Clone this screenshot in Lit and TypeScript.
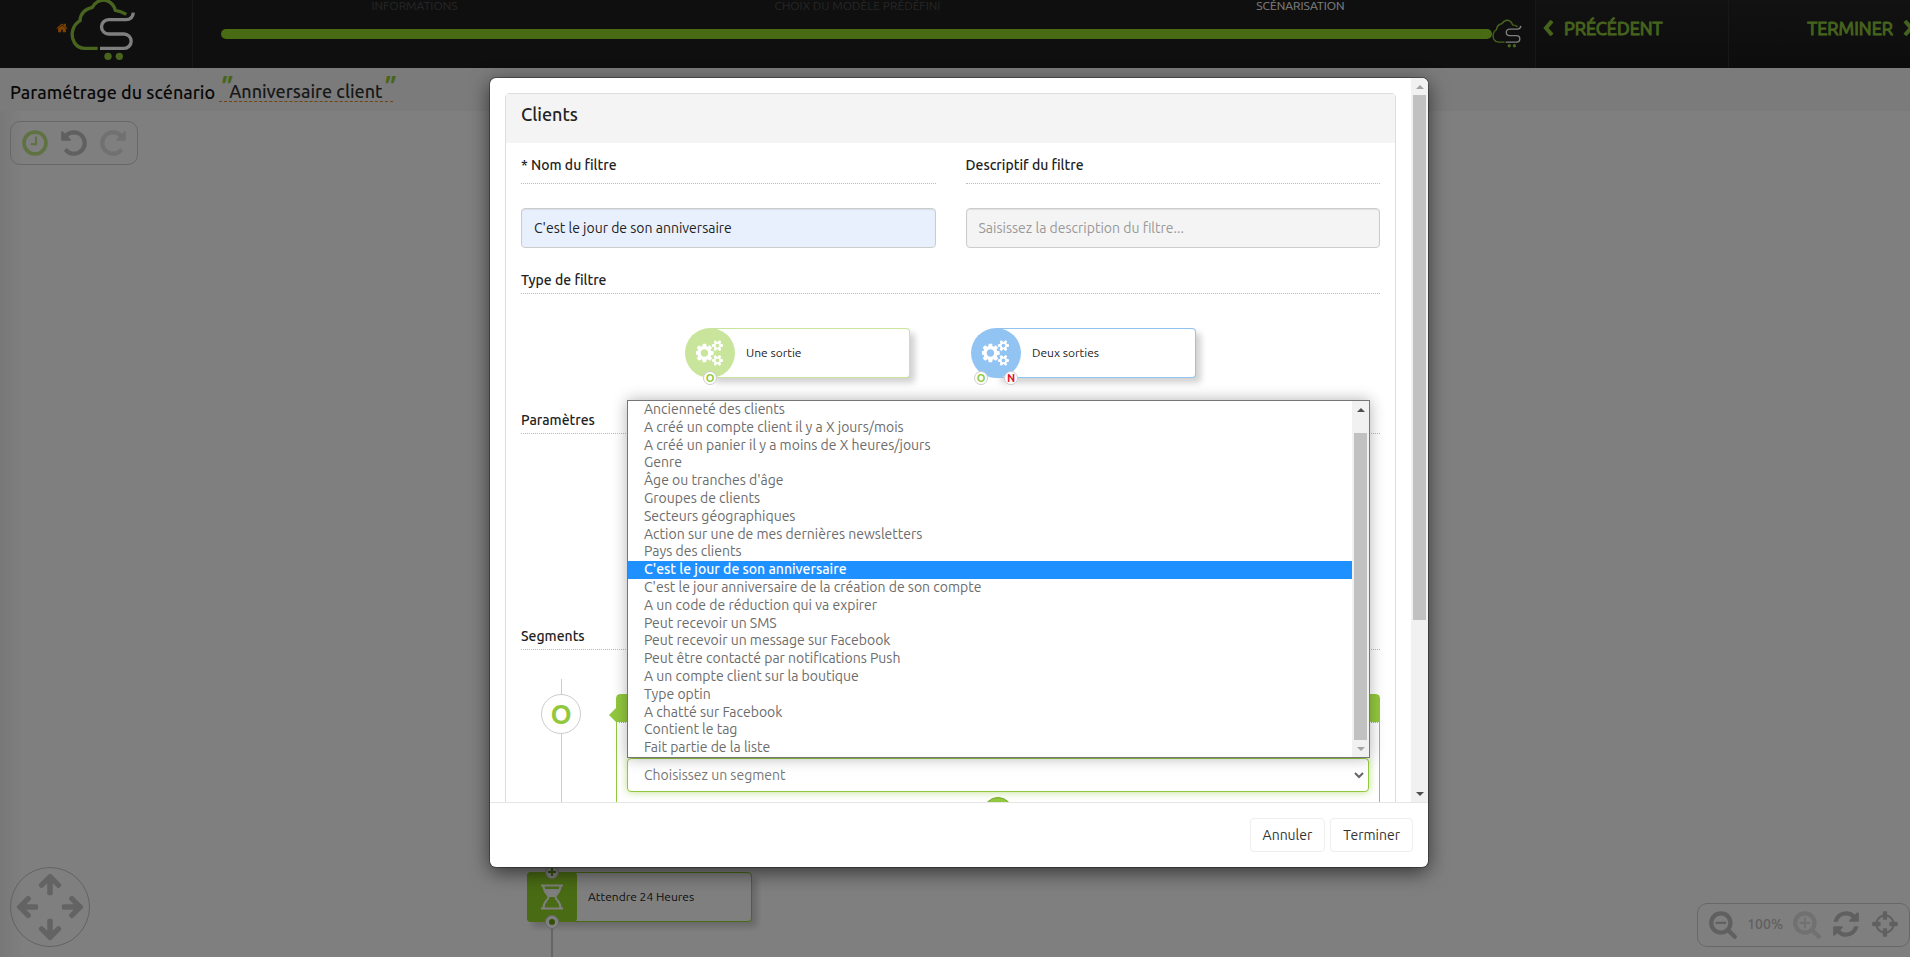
import { LitElement, html, css, svg } from "lit";
import { customElement, property, state } from "lit/decorators.js";
import { classMap } from "lit/directives/class-map.js";

const ICONS: Record<string, string> = {
  home: "M1472 992v480q0 26-19 45t-45 19h-384v-384h-256v384h-384q-26 0-45-19t-19-45v-480q0-1 .5-3t.5-3l575-474 575 474q1 2 1 6zm223-69l-62 74q-8 9-21 11h-3q-13 0-21-7l-692-577-692 577q-12 8-24 7-13-2-21-11l-62-74q-8-10-7-23.5t11-21.5l719-599q32-26 76-26t76 26l244 204v-195q0-14 9-23t23-9h192q14 0 23 9t9 23v408l219 182q10 8 11 21.5t-7 23.5z",
  clock: "M1024 544v448q0 14-9 23t-23 9h-320q-14 0-23-9t-9-23v-64q0-14 9-23t23-9h224v-352q0-14 9-23t23-9h64q14 0 23 9t9 23zm416 352q0-148-73-273t-198-198-273-73-273 73-198 198-73 273 73 273 198 198 273 73 273-73 198-198 73-273zm224 0q0 209-103 385.5t-279.5 279.5-385.5 103-385.5-103-279.5-279.5-103-385.5 103-385.5 279.5-279.5 385.5-103 385.5 103 279.5 279.5 103 385.5z",
  undo: "M1664 896q0 156-61 298t-164 245-245 164-298 61q-172 0-327-72.5t-264-204.5q-7-10-6.5-22.5t8.5-20.5l137-138q10-9 25-9 16 2 23 12 73 95 179 147t225 52q104 0 198.5-40.5t163.5-109.5 109.5-163.5 40.5-198.5-40.5-198.5-109.5-163.5-163.5-109.5-198.5-40.5q-98 0-188 35.5t-160 101.5l137 138q31 30 14 69-17 40-59 40h-448q-26 0-45-19t-19-45v-448q0-42 40-59 39-17 69 14l130 129q107-101 244.5-156.5t284.5-55.5q156 0 298 61t245 164 164 245 61 298z",
  arrow: "M1664 896v128q0 53-32.5 90.5t-84.5 37.5h-704l293 294q38 36 38 90t-38 90l-75 76q-37 37-90 37-52 0-91-37l-651-652q-37-37-37-90 0-52 37-91l651-650q38-38 91-38 52 0 90 38l75 74q38 38 38 91t-38 91l-293 293h704q52 0 84.5 37.5t32.5 90.5z",
  zoomOut: "M1088 800v64q0 13-9.5 22.5t-22.5 9.5h-576q-13 0-22.5-9.5t-9.5-22.5v-64q0-13 9.5-22.5t22.5-9.5h576q13 0 22.5 9.5t9.5 22.5zm128 32q0-185-131.5-316.5t-316.5-131.5-316.5 131.5-131.5 316.5 131.5 316.5 316.5 131.5 316.5-131.5 131.5-316.5zm512 832q0 53-37.5 90.5t-90.5 37.5q-54 0-90-38l-343-342q-179 124-399 124-143 0-273.5-55.5t-225-150-150-225-55.5-273.5 55.5-273.5 150-225 225-150 273.5-55.5 273.5 55.5 225 150 150 225 55.5 273.5q0 220-124 399l343 343q37 37 37 90z",
  zoomIn: "M1088 800v64q0 13-9.5 22.5t-22.5 9.5h-224v224q0 13-9.5 22.5t-22.5 9.5h-64q-13 0-22.5-9.5t-9.5-22.5v-224h-224q-13 0-22.5-9.5t-9.5-22.5v-64q0-13 9.5-22.5t22.5-9.5h224v-224q0-13 9.5-22.5t22.5-9.5h64q13 0 22.5 9.5t9.5 22.5v224h224q13 0 22.5 9.5t9.5 22.5zm128 32q0-185-131.5-316.5t-316.5-131.5-316.5 131.5-131.5 316.5 131.5 316.5 316.5 131.5 316.5-131.5 131.5-316.5zm512 832q0 53-37.5 90.5t-90.5 37.5q-54 0-90-38l-343-342q-179 124-399 124-143 0-273.5-55.5t-225-150-150-225-55.5-273.5 55.5-273.5 150-225 225-150 273.5-55.5 273.5 55.5 225 150 150 225 55.5 273.5q0 220-124 399l343 343q37 37 37 90z",
  refresh: "M1639 1056q0 5-1 7-64 268-268 434.5t-478 166.5q-146 0-282.5-55t-243.5-157l-129 129q-19 19-45 19t-45-19-19-45v-448q0-26 19-45t45-19h448q26 0 45 19t19 45-19 45l-137 137q71 66 161 102t187 36q134 0 250-65t186-179q11-17 53-117 8-23 30-23h192q13 0 22.5 9.5t9.5 22.5zm25-800v448q0 26-19 45t-45 19h-448q-26 0-45-19t-19-45 19-45l138-138q-148-137-349-137-134 0-250 65t-186 179q-11 17-53 117-8 23-30 23h-199q-13 0-22.5-9.5t-9.5-22.5v-7q65-268 270-434.5t480-166.5q146 0 284 55.5t245 156.5l130-129q19-19 45-19t45 19 19 45z",
  target: "M1325 1024h-109q-26 0-45-19t-19-45v-128q0-26 19-45t45-19h109q-32-108-112.5-188.5t-188.5-112.5v109q0 26-19 45t-45 19h-128q-26 0-45-19t-19-45v-109q-108 32-188.5 112.5t-112.5 188.5h109q26 0 45 19t19 45v128q0 26-19 45t-45 19h-109q32 108 112.5 188.5t188.5 112.5v-109q0-26 19-45t45-19h128q26 0 45 19t19 45v109q108-32 188.5-112.5t112.5-188.5zm339-192v128q0 26-19 45t-45 19h-143q-37 161-154.5 278.5t-278.5 154.5v143q0 26-19 45t-45 19h-128q-26 0-45-19t-19-45v-143q-161-37-278.5-154.5t-154.5-278.5h-143q-26 0-45-19t-19-45v-128q0-26 19-45t45-19h143q37-161 154.5-278.5t278.5-154.5v-143q0-26 19-45t45-19h128q26 0 45 19t19 45v143q161 37 278.5 154.5t154.5 278.5h143q26 0 45 19t19 45z",
  cogs: "M832 896q0-106-75-181t-181-75-181 75-75 181 75 181 181 75 181-75 75-181zm768 512q0-52-38-90t-90-38-90 38-38 90q0 53 37.5 90.5t90.5 37.5 90.5-37.5 37.5-90.5zm0-1024q0-52-38-90t-90-38-90 38-38 90q0 53 37.5 90.5t90.5 37.5 90.5-37.5 37.5-90.5zm-384 421v185q0 10-7 19.5t-16 10.5l-155 24q-11 35-32 76 34 48 90 115 7 11 7 20 0 12-7 19-23 30-82.5 89.5t-78.5 59.5q-11 0-21-7l-115-90q-37 19-77 31-11 108-23 155-7 24-30 24h-186q-11 0-20-7.5t-10-17.5l-23-153q-34-10-75-31l-118 89q-7 7-20 7-11 0-21-8-144-133-144-160 0-9 7-19 10-14 41-53t47-61q-23-44-35-82l-152-24q-10-1-17-9.5t-7-19.5v-185q0-10 7-19.5t16-10.5l155-24q11-35 32-76-34-48-90-115-7-11-7-20 0-12 7-20 22-30 82-89t79-59q11 0 21 7l115 90q34-18 77-32 11-108 23-154 7-24 30-24h186q11 0 20 7.5t10 17.5l23 153q34 10 75 31l118-89q8-7 20-7 11 0 21 8 144 133 144 160 0 8-7 19-12 16-42 54t-45 60q23 48 34 82l152 23q10 2 17 10.5t7 19.5zm640 533v140q0 16-149 31-12 27-30 52 51 113 51 138 0 4-4 7-122 71-124 71-8 0-46-47t-52-68q-20 2-30 2t-30-2q-14 21-52 68t-46 47q-2 0-124-71-4-3-4-7 0-25 51-138-18-25-30-52-149-15-149-31v-140q0-16 149-31 13-29 30-52-51-113-51-138 0-4 4-7 4-2 35-20t59-34 30-16q8 0 46 46.5t52 67.5q20-2 30-2t30 2q51-71 92-112l6-2q4 0 124 70 4 3 4 7 0 25-51 138 17 23 30 52 149 15 149 31zm0-1024v140q0 16-149 31-12 27-30 52 51 113 51 138 0 4-4 7-122 71-124 71-8 0-46-47t-52-68q-20 2-30 2t-30-2q-14 21-52 68t-46 47q-2 0-124-71-4-3-4-7 0-25 51-138-18-25-30-52-149-15-149-31v-140q0-16 149-31 13-29 30-52-51-113-51-138 0-4 4-7 4-2 35-20t59-34 30-16q8 0 46 46.5t52 67.5q20-2 30-2t30 2q51-71 92-112l6-2q4 0 124 70 4 3 4 7 0 25-51 138 17 23 30 52 149 15 149 31z",
};

const VIEW_BOXES: Record<string, string> = {
  cogs: "0 0 1920 1792",
  arrow: "0 64 1792 1792",
};

const SEGMENTS = [
  "Ancienneté des clients",
  "A créé un compte client il y a X jours/mois",
  "A créé un panier il y a moins de X heures/jours",
  "Genre",
  "Âge ou tranches d'âge",
  "Groupes de clients",
  "Secteurs géographiques",
  "Action sur une de mes dernières newsletters",
  "Pays des clients",
  "C'est le jour de son anniversaire",
  "C'est le jour anniversaire de la création de son compte",
  "A un code de réduction qui va expirer",
  "Peut recevoir un SMS",
  "Peut recevoir un message sur Facebook",
  "Peut être contacté par notifications Push",
  "A un compte client sur la boutique",
  "Type optin",
  "A chatté sur Facebook",
  "Contient le tag",
  "Fait partie de la liste",
];

@customElement("fa-icon")
class FaIcon extends LitElement {
  @property() name = "home";
  static styles = css`
    :host { display: inline-flex; flex: none; width: 30px; height: 30px; }
    svg { width: 100%; height: 100%; fill: currentColor; }
  `;
  render() {
    const box = VIEW_BOXES[this.name] ?? "0 0 1792 1792";
    return html`<svg viewBox=${box} aria-hidden="true">${svg`<path d=${ICONS[this.name]}></path>`}</svg>`;
  }
}

@customElement("cloud-logo")
class CloudLogo extends LitElement {
  @property({ type: Number }) weight = 10;
  static styles = css`
    :host { display: block; flex: none; }
    svg { display: block; width: 100%; height: 100%; fill: none; overflow: visible; }
    .cloud { stroke: #92c83e; }
    .road { stroke: #ffffff; }
    .wheel { fill: #92c83e; }
  `;
  render() {
    return html`<svg viewBox="60 0 198 183" aria-hidden="true" stroke-width=${this.weight}>
      <path class="cloud" d="M143 145H105C76 145 62 118 68 92Q73 72 90 62Q92 30 127 22Q142 -3 168 1Q190 8 196 31Q212 33 229 43"></path>
      <path class="road" d="M150 145H222a21 21 0 0 0 0-43H176a21 21 0 0 1 0-43H228Q248 59 250 38"></path>
      <circle class="wheel" cx="174" cy="169" r="11"></circle>
      <circle class="wheel" cx="208" cy="169" r="11"></circle>
    </svg>`;
  }
}

@customElement("scroll-strip")
class ScrollStrip extends LitElement {
  static styles = css`
    :host { display: flex; flex-direction: column; align-items: center; flex: none; width: 17px; background: #f1f1f1; }
    .arrow { height: 17px; display: flex; align-items: center; justify-content: center; flex: none; }
    .arrow::before { content: ""; border: 4px solid transparent; }
    .up::before { border-top-width: 0; border-bottom-color: var(--up, #505050); }
    .down::before { border-bottom-width: 0; border-top-color: var(--down, #505050); }
    .track { flex: 1; width: 13px; display: flex; flex-direction: column; }
    .before { flex: var(--before, 0) 0 0; }
    .thumb { flex: var(--size, 1) 0 0; background: #c1c1c1; }
    .after { flex: var(--after, 0) 0 0; }
  `;
  render() {
    return html`<span class="arrow up"></span>
      <span class="track"><span class="before"></span><span class="thumb"></span><span class="after"></span></span>
      <span class="arrow down"></span>`;
  }
}

@customElement("app-root")
class AppRoot extends LitElement {
  @state() private selected = 9;

  static styles = css`
    :host {
      display: block; position: relative; height: 100vh; overflow: hidden; background: #fff; color: #222;
      font-family: Ubuntu, "Noto Sans", "Open Sans", sans-serif; font-size: 14px; line-height: 20px;
    }
    * { box-sizing: border-box; }
    h1, h2, h3 { margin: 0; font-weight: 500; }
    button, input, select { font: inherit; color: inherit; }

    .page { display: flex; flex-direction: column; height: 100%; isolation: isolate; }
    .top { display: grid; grid-template-columns: 193px 1fr 193px 182px; height: 68px; background: #1f1f1f; flex: none; }
    .brand { display: flex; align-items: flex-start; padding-left: 56px; border-right: 1px solid #303030; color: #ff8400; }
    .brand fa-icon { width: 12px; height: 12px; margin-top: 22px; margin-right: 2px; }
    .brand cloud-logo { width: 66px; height: 61px; }
    .wizard { display: flex; flex-direction: column; padding-right: 13px; }
    .steps { display: grid; grid-template-columns: repeat(3, 1fr); margin-bottom: 7px; color: #4d4d4d; font-size: 12px; line-height: 12px; text-align: center; }
    .steps .on { color: #fff; }
    .progress { display: flex; align-items: center; padding-left: 28px; }
    .bar { flex: 1; height: 10px; border-radius: 5px; background: #92d628; }
    .progress cloud-logo { width: 30px; height: 30px; }
    .move { display: flex; align-items: center; gap: 10px; padding: 0 0 12px 7px; border: 0; border-left: 1px solid #303030; background: linear-gradient(#242424, #1a1a1a); color: #8cc63a; font-size: 18px; -webkit-text-stroke: 1px currentColor; }
    .move svg { width: 11px; height: 16px; fill: none; stroke: currentColor; stroke-width: 4; flex: none; }
    .next { justify-content: flex-end; padding: 0 0 12px; margin-right: -4px; }

    .title { display: flex; align-items: center; gap: 4px; flex: none; height: 43px; padding: 4px 10px 0; background: #f6f6f6; font-size: 18px; line-height: 20px; }
    .title h1 { font-size: 18px; color: #111; }
    .name { display: flex; border-bottom: 1px dashed #e08a1e; color: #333; font-weight: 500; }
    .quote { width: 10px; color: #8fcb36; font-size: 26px; font-style: italic; font-weight: 700; line-height: 12px; }

    .canvas { position: relative; flex: 1; background: linear-gradient(90deg, #f0f0f0, #fff 24px); }
    .tools { position: absolute; display: flex; align-items: center; height: 44px; border: 1px solid #cfcfcf; border-radius: 10px; color: #c0c0c0; }
    .tools button, .pad button { display: flex; padding: 0; border: 0; background: none; color: inherit; }
    .history { left: 10px; top: 10px; gap: 9px; padding: 0 9px; }
    .history .clock { color: #bfe585; }
    .tools .off { color: #e2e2e2; }
    .mirror { transform: scaleX(-1); }
    .zoom { right: 0; bottom: 10px; gap: 9px; padding: 0 9px 2px 10px; font-weight: 500; }
    .pad { position: absolute; left: 10px; bottom: 10px; display: grid; grid-template-areas: ". u ." "l . r" ". d ."; place-items: center; width: 80px; height: 80px; padding: 5px; border: 1px solid #c4c4c4; border-radius: 50%; color: #c6c6c6; }
    .pad fa-icon { width: 26px; height: 26px; }
    .u { grid-area: u; transform: rotate(90deg); }
    .l { grid-area: l; }
    .r { grid-area: r; transform: rotate(180deg); }
    .d { grid-area: d; transform: rotate(-90deg); }
    .pad .u, .pad .l, .pad .r, .pad .d { width: 22px; height: 22px; align-items: center; justify-content: center; }

    .node { position: relative; display: flex; align-items: center; gap: 11px; width: 225px; height: 50px; border: 1px solid var(--tone); border-radius: 4px; background: #fff; box-shadow: 5px 5px 6px rgba(0, 0, 0, 0.18); font-size: 12px; }
    .disc { display: flex; align-items: center; justify-content: center; width: 50px; height: 50px; border-radius: 50%; background: var(--tone); color: #fff; z-index: 1; }
    .disc fa-icon { width: 28px; height: 26px; }
    .square { margin-left: -1px; border-radius: 4px; }
    .disc svg { width: 22px; height: 26px; fill: none; stroke: #fff; stroke-width: 2; }
    .disc .sand { fill: #fff; stroke: none; }
    .port { position: absolute; z-index: 2; display: flex; align-items: center; justify-content: center; width: 14px; height: 14px; border: 1px solid #ccc; border-radius: 50%; background: #fff; color: #8fc93a; font-size: 11px; font-weight: 700; line-height: 12px; bottom: -7px; left: 18px; }
    .port.yes { left: 3px; }
    .port.no { left: 33px; color: #e3132c; }
    .port.in { bottom: auto; top: -8px; left: 17px; }
    .port.out { bottom: -8px; left: 17px; }
    .port.in::before { content: ""; width: 8px; height: 8px; background: linear-gradient(#6aa012, #6aa012) center / 8px 2px no-repeat, linear-gradient(#6aa012, #6aa012) center / 2px 8px no-repeat; }
    .port.out::before { content: ""; width: 6px; height: 6px; border-radius: 50%; background: #6aa012; }
    .wait { position: absolute; left: 527px; bottom: 35px; --tone: #92d628; }
    .wire { position: absolute; left: 551px; bottom: 0; width: 2px; height: 28px; background: #ccc; }

    .backdrop { position: absolute; inset: 0; display: flex; justify-content: center; padding: 78px 0 90px 8px; background: rgba(0, 0, 0, 0.5); }
    .dialog { display: flex; flex-direction: column; width: 938px; max-width: 100%; border-radius: 6px; background: #fff; box-shadow: 0 0 0 1px rgba(0, 0, 0, 0.3), 0 5px 20px rgba(0, 0, 0, 0.6); overflow: hidden; }
    .scroll { display: flex; flex: 1; min-height: 0; overflow: hidden; }
    .view { flex: 1; padding: 15px; }
    .scroll > scroll-strip { --up: #a3a3a3; --before: 0; --size: 525; --after: 165; }
    .panel { border: 1px solid #ddd; border-radius: 4px; }
    .panel-head { padding: 8px 15px 17px; background: #f4f4f4; }
    .panel-head h2 { font-size: 18px; line-height: 24px; }
    .panel-body { padding: 12px 15px; }
    .fields { display: grid; grid-template-columns: 1fr 1fr; gap: 30px; margin-bottom: 22px; }
    .fields label { display: block; padding-bottom: 8px; margin-bottom: 24px; border-bottom: 1px dotted #bbb; font-weight: 500; }
    .fields input { display: block; width: 100%; height: 40px; padding: 0 12px; border: 1px solid #ccc; border-radius: 4px; background: #f4f4f4; box-shadow: inset 0 1px 1px rgba(0, 0, 0, 0.08); }
    .fields .filled { background: #e8f0fe; }
    .fields input::placeholder { color: #999; opacity: 1; }
    h3 { padding-bottom: 3px; border-bottom: 1px dotted #bbb; font-size: 14px; }
    .types { display: flex; justify-content: center; gap: 61px; padding: 34px 20px 32px 0; }
    .types .node { padding: 0; border: 0; background: none; box-shadow: none; text-align: left; cursor: pointer; }
    .types .node::before { content: ""; position: absolute; inset: 0 0 0 25px; border: 1px solid var(--tone); border-left: 0; border-radius: 0 4px 4px 0; background: #fff; box-shadow: 5px 5px 6px rgba(0, 0, 0, 0.18); }
    .types .caption { position: relative; }
    .one { --tone: #c8e59b; }
    .two { --tone: #92c4f3; }
    .params { height: 192px; }

    .segment { display: flex; padding-top: 29px; }
    .rail { display: flex; flex-direction: column; align-items: center; width: 80px; margin-right: 15px; }
    .rail::before { content: ""; width: 1px; height: 15px; background: #ccc; }
    .rail::after { content: ""; flex: 1; width: 1px; background: #ccc; }
    .badge { display: flex; align-items: center; justify-content: center; width: 40px; height: 40px; border: 1px solid #ccc; border-radius: 50%; color: #92c83e; font-size: 27px; font-weight: 600; }
    .card { flex: 1; height: 170px; margin-top: 15px; border: 1px solid #92c83e; border-radius: 4px; }
    .card-head { position: relative; height: 28px; margin-bottom: 35px; border-bottom: 1px dotted #fff; background: #92c83e; }
    .card-head::before { content: ""; position: absolute; right: 100%; top: 12px; border: 8px solid transparent; border-left-width: 0; border-right-color: #92c83e; }
    .pick { position: relative; margin: 0 10px 5px; }
    .pick select { appearance: none; display: block; width: 100%; height: 34px; padding: 0 16px; border: 1px solid #92c83e; border-radius: 4px; background: #fff; color: #777; box-shadow: 0 0 8px rgba(146, 200, 62, 0.6); outline: 0; }
    .chevron { position: absolute; right: 5px; top: 13px; width: 10px; height: 8px; fill: none; stroke: #666; stroke-width: 2; pointer-events: none; }
    .popup { position: absolute; left: 0; right: -1px; bottom: 34px; display: flex; height: 358px; border: 1px solid #767676; background: #fff; box-shadow: 0 0 14px rgba(0, 0, 0, 0.3); }
    .popup ul { flex: 1; display: grid; grid-template-rows: repeat(20, 1fr); margin: 0; padding: 0; list-style: none; color: #6c6c6c; line-height: 16px; }
    .popup li { padding-left: 16px; min-height: 0; }
    .popup .chosen { background: #1e90ff; color: #fff; font-weight: 500; }
    .popup scroll-strip { --before: 15; --size: 307; --after: 0; --down: #a3a3a3; }
    .add { display: block; width: 30px; height: 30px; margin: 0 auto; padding: 0; border: 1px solid #76a82b; border-radius: 50%; background: #92c83e; position: relative; }

    .foot { display: flex; justify-content: flex-end; gap: 5px; flex: none; height: 65px; padding: 15px; border-top: 1px solid #e5e5e5; }
    .foot button { height: 34px; padding: 0 12px; border: 1px solid #eee; border-radius: 4px; background: #fff; color: #333; }
  `;

  private typeNode(kind: string, label: string, ports: unknown) {
    return html`<button class="node ${kind}" type="button">
      <span class="disc"><fa-icon name="cogs"></fa-icon></span><span class="caption">${label}</span>${ports}
    </button>`;
  }

  render() {
    return html`
      <div class="page">
        <header class="top">
          <div class="brand"><fa-icon name="home"></fa-icon><cloud-logo></cloud-logo></div>
          <div class="wizard">
            <div class="steps"><span>INFORMATIONS</span><span>CHOIX DU MODÈLE PRÉDÉFINI</span><span class="on">SCÉNARISATION</span></div>
            <div class="progress"><div class="bar"></div><cloud-logo weight="9"></cloud-logo></div>
          </div>
          <button class="move" type="button"><svg viewBox="0 0 11 16"><path d="M9 1L3 8l6 7"></path></svg>PRÉCÉDENT</button>
          <button class="move next" type="button">TERMINER<svg viewBox="0 0 11 16"><path d="M2 1l6 7-6 7"></path></svg></button>
        </header>
        <div class="title">
          <h1>Paramétrage du scénario</h1>
          <div class="name"><span class="quote">"</span><span>Anniversaire client</span><span class="quote">"</span></div>
        </div>
        <main class="canvas">
          <div class="tools history">
            <button class="clock" type="button" aria-label="Historique"><fa-icon name="clock"></fa-icon></button>
            <button type="button" aria-label="Annuler l'action"><fa-icon name="undo"></fa-icon></button>
            <button class="off mirror" type="button" aria-label="Rétablir"><fa-icon name="undo"></fa-icon></button>
          </div>
          <div class="wire"></div>
          <div class="node wait">
            <span class="disc square"><svg viewBox="0 0 22 26"><path d="M0 1.500h22M0 24.500h22M2.500 2c0 7 5 8 5 11s-5 4-5 11M19.500 2c0 7-5 8-5 11s5 4 5 11"></path><path class="sand" d="M4 5h14c-1 4-4 5-4 8H8c0-3-3-4-4-8z"></path></svg></span>Attendre 24 Heures
            <span class="port in"></span><span class="port out"></span>
          </div>
          <div class="pad">
            <button class="u" type="button" aria-label="Haut"><fa-icon name="arrow"></fa-icon></button>
            <button class="l" type="button" aria-label="Gauche"><fa-icon name="arrow"></fa-icon></button>
            <button class="r" type="button" aria-label="Droite"><fa-icon name="arrow"></fa-icon></button>
            <button class="d" type="button" aria-label="Bas"><fa-icon name="arrow"></fa-icon></button>
          </div>
          <div class="tools zoom">
            <button type="button" aria-label="Dézoomer"><fa-icon name="zoomOut"></fa-icon></button>
            <span>100%</span>
            <button class="off" type="button" aria-label="Zoomer"><fa-icon name="zoomIn"></fa-icon></button>
            <button type="button" aria-label="Actualiser"><fa-icon name="refresh"></fa-icon></button>
            <button type="button" aria-label="Centrer"><fa-icon name="target"></fa-icon></button>
          </div>
        </main>
      </div>

      <div class="backdrop">
        <div class="dialog" role="dialog" aria-label="Clients">
          <div class="scroll">
            <div class="view">
              <section class="panel">
                <div class="panel-head"><h2>Clients</h2></div>
                <div class="panel-body">
                  <div class="fields">
                    <div><label for="nom">* Nom du filtre</label><input class="filled" id="nom" type="text" .value=${"C'est le jour de son anniversaire"}></div>
                    <div><label for="desc">Descriptif du filtre</label><input id="desc" type="text" placeholder="Saisissez la description du filtre..."></div>
                  </div>
                  <h3>Type de filtre</h3>
                  <div class="types">
                    ${this.typeNode("one", "Une sortie", html`<span class="port">O</span>`)}
                    ${this.typeNode("two", "Deux sorties", html`<span class="port yes">O</span><span class="port no">N</span>`)}
                  </div>
                  <h3>Paramètres</h3>
                  <div class="params"></div>
                  <h3>Segments</h3>
                  <div class="segment">
                    <div class="rail"><span class="badge">O</span></div>
                    <div class="card">
                      <div class="card-head"></div>
                      <div class="pick">
                        <select aria-label="Segment"><option>Choisissez un segment</option></select>
                        <svg class="chevron" viewBox="0 0 10 8"><path d="M1 2l4 4 4-4"></path></svg>
                        <div class="popup">
                          <ul role="listbox" aria-label="Segments">
                            ${SEGMENTS.map((text, i) => html`<li role="option" aria-selected=${i === this.selected ? "true" : "false"}
                              class=${classMap({ chosen: i === this.selected })} @mouseenter=${() => (this.selected = i)}>${text}</li>`)}
                          </ul>
                          <scroll-strip></scroll-strip>
                        </div>
                      </div>
                      <button class="add" type="button" aria-label="Ajouter"></button>
                    </div>
                  </div>
                </div>
              </section>
            </div>
            <scroll-strip></scroll-strip>
          </div>
          <footer class="foot"><button type="button">Annuler</button><button type="button">Terminer</button></footer>
        </div>
      </div>
    `;
  }
}
